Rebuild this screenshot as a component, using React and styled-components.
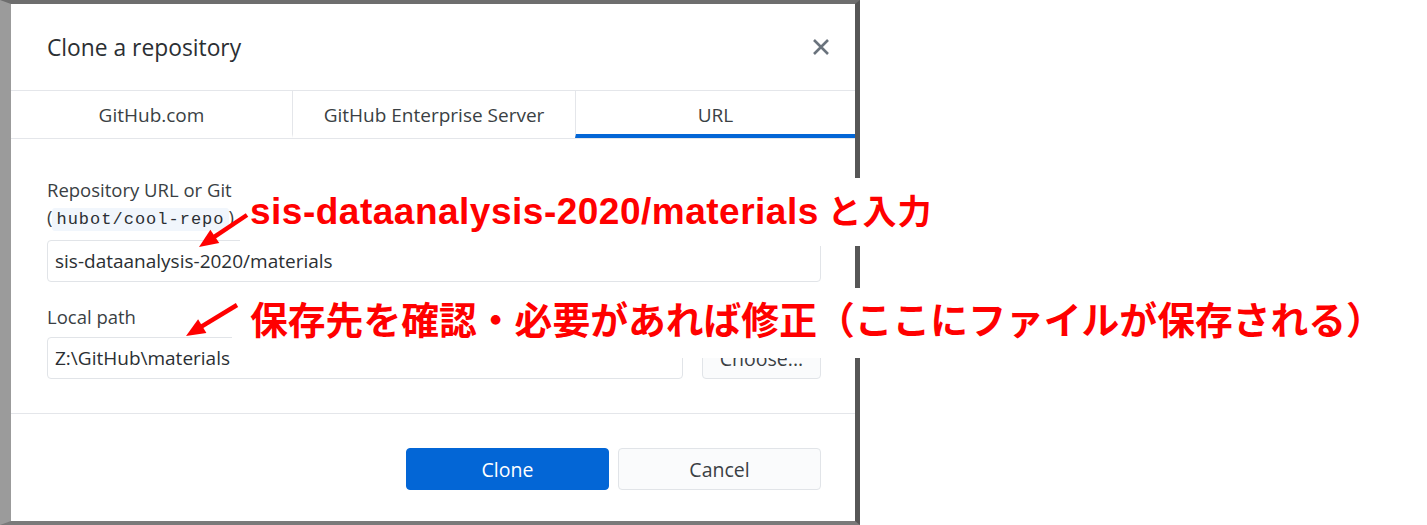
import React from "react";
import styled, { createGlobalStyle } from "styled-components";

const Global = createGlobalStyle`
  html, body { margin: 0; padding: 0; background: #ffffff; }
  body { font-family: "Open Sans", "Noto Sans", sans-serif; }
  * { box-sizing: border-box; }
`;

const Stage = styled.div`
  position: relative;
  width: 1427px;
  height: 525px;
  overflow: hidden;
`;

const Backdrop = styled.div`
  width: 860px;
  height: 525px;
  display: flex;
  border-left: 11px solid #9b9b9b;
  border-top: 4px solid #6e6e6e;
  border-right: 5px solid #565656;
  border-bottom: 4px solid #7a7a7a;
  background: #8c8c8c;
`;

const Dialog = styled.div`
  flex: 1;
  background: #ffffff;
  display: flex;
  flex-direction: column;
`;

const Header = styled.div`
  height: 86px;
  display: flex;
  align-items: center;
  justify-content: space-between;
  padding: 0 22px 0 36px;
`;

const Title = styled.h1`
  margin: 0;
  font-size: 22.8px;
  font-weight: 400;
  color: #2b2f33;
`;

const CloseButton = styled.button`
  border: 0;
  background: transparent;
  padding: 0;
  width: 24px;
  height: 24px;
  display: flex;
  align-items: center;
  justify-content: center;
`;

const TabBar = styled.div`
  display: grid;
  grid-template-columns: 281px 283px 1fr;
  height: 49px;
  border-top: 1px solid #e4e6ea;
  border-bottom: 1px solid #e4e6ea;
`;

const Tab = styled.div`
  display: flex;
  align-items: center;
  justify-content: center;
  font-size: 19px;
  color: #3a3f44;
  border-left: ${(p) => (p.$first ? "0" : "1px solid #e4e6ea")};
  border-bottom: 4px solid ${(p) => (p.$active ? "#0366d6" : "transparent")};
  padding-top: 4px;
`;

const Body = styled.div`
  padding: 37px 34px 34px 36px;
  display: flex;
  flex-direction: column;
  gap: 21px;
  border-bottom: 1px solid #e4e6ea;
`;

const Field = styled.div`
  display: flex;
  flex-direction: column;
`;

const Label = styled.div`
  font-size: 18.5px;
  line-height: 27px;
  color: #3a3f44;
  margin-bottom: 7px;
  white-space: nowrap;
`;

const Code = styled.code`
  font-family: "Liberation Mono", "DejaVu Sans Mono", monospace;
  font-size: 17px;
  letter-spacing: 1px;
  background: #f1f6fc;
  border-radius: 3px;
  padding: 2px 4px;
  color: #2b2f33;
`;

const Row = styled.div`
  display: flex;
  gap: 19px;
`;

const Input = styled.div`
  flex: 1;
  height: 42px;
  border: 1px solid #e1e4e8;
  border-radius: 4px;
  display: flex;
  align-items: center;
  padding: 0 7px;
  font-size: 19px;
  color: #2b2f33;
`;

const Button = styled.button`
  width: ${(p) => p.$w || 203}px;
  height: 42px;
  border-radius: 4px;
  font-family: inherit;
  font-size: 19.5px;
  display: flex;
  align-items: center;
  justify-content: center;
  border: 1px solid ${(p) => (p.$primary ? "#0366d6" : "#e1e4e8")};
  background: ${(p) => (p.$primary ? "#0366d6" : "#fafbfc")};
  color: ${(p) => (p.$primary ? "#ffffff" : "#3a3f44")};
`;

const Footer = styled.div`
  display: flex;
  justify-content: flex-end;
  gap: 9px;
  padding: 34px 34px 0 0;
`;

const Note = styled.div`
  position: absolute;
  left: ${(p) => p.$x}px;
  top: ${(p) => p.$y}px;
  background: #ffffff;
  color: #ff0000;
  font-weight: 700;
  white-space: nowrap;
  padding: ${(p) => p.$pad};
  line-height: 48px;
`;

const Latin = styled.span`
  font-family: "Liberation Sans", Arial, sans-serif;
  font-size: 37px;
  letter-spacing: 0.5px;
`;

const Jp = styled.span`
  font-family: "Noto Sans CJK JP", "Noto Sans", sans-serif;
  font-size: ${(p) => p.$size}px;
  letter-spacing: ${(p) => p.$ls || 0}px;
`;

const ArrowSvg = styled.svg`
  position: absolute;
  left: 0;
  top: 0;
  width: 1427px;
  height: 525px;
  pointer-events: none;
`;

function Arrow({ x1, y1, x2, y2 }) {
  const dx = x2 - x1;
  const dy = y2 - y1;
  const len = Math.hypot(dx, dy);
  const ux = dx / len;
  const uy = dy / len;
  const hl = 19;
  const hw = 8;
  const bx = x2 - ux * hl;
  const by = y2 - uy * hl;
  const px = -uy;
  const py = ux;
  const pts = `${x2},${y2} ${bx + px * hw},${by + py * hw} ${bx - px * hw},${by - py * hw}`;
  return (
    <g>
      <line x1={x1} y1={y1} x2={bx + ux * 2} y2={by + uy * 2} stroke="#ff0000" strokeWidth="4.5" />
      <polygon points={pts} fill="#ff0000" />
    </g>
  );
}

export default function App() {
  return (
    <>
      <Global />
      <Stage>
        <Backdrop>
          <Dialog>
            <Header>
              <Title>Clone a repository</Title>
              <CloseButton aria-label="Close">
                <svg width="18" height="18" viewBox="0 0 18 18">
                  <path d="M2 2 L16 16 M16 2 L2 16" stroke="#6a737d" strokeWidth="2.6" strokeLinecap="butt" />
                </svg>
              </CloseButton>
            </Header>
            <TabBar>
              <Tab $first>GitHub.com</Tab>
              <Tab>GitHub Enterprise Server</Tab>
              <Tab $active>URL</Tab>
            </TabBar>
            <Body>
              <Field>
                <Label>
                  Repository URL or Git
                  <br />
                  (<Code>hubot/cool-repo</Code>)
                </Label>
                <Row>
                  <Input>sis-dataanalysis-2020/materials</Input>
                </Row>
              </Field>
              <Field>
                <Label>Local path</Label>
                <Row>
                  <Input>Z:\GitHub\materials</Input>
                  <Button $w={119}>Choose...</Button>
                </Row>
              </Field>
            </Body>
            <Footer>
              <Button $primary>Clone</Button>
              <Button>Cancel</Button>
            </Footer>
          </Dialog>
        </Backdrop>

        <Note $x={240} $y={178} $pad="8px 12px 4px 10px">
          <Latin>sis-dataanalysis-2020/materials</Latin>
          <Jp $size={34} $ls={1}> と入力</Jp>
        </Note>
        <Note $x={232} $y={288} $pad="6px 10px 6px 18px">
          <Jp $size={37.8}>保存先を確認・必要があれば修正（ここにファイルが保存される）</Jp>
        </Note>

        <ArrowSvg viewBox="0 0 1427 525">
          <Arrow x1={247} y1={215} x2={199} y2={247} />
          <Arrow x1={237} y1={305} x2={186} y2={336} />
        </ArrowSvg>
      </Stage>
    </>
  );
}
